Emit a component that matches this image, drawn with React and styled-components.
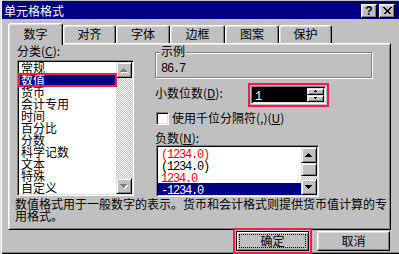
import React from "react";
import styled, { createGlobalStyle } from "styled-components";

const FACE = "#c0c0c0";
const LIGHT = "#dfdfdf";
const SHADOW = "#808080";
const NAVY = "#000080";
const MARK = "#e8204f";

const GlobalStyle = createGlobalStyle`
  * { box-sizing: border-box; }
  html, body { margin: 0; padding: 0; background: ${FACE}; }
  body {
    font-family: "Noto Sans CJK SC", "Noto Sans", sans-serif;
    font-size: 12px;
    line-height: 12px;
    color: #000;
  }
`;

const Window = styled.div`
  width: 399px;
  height: 254px;
  overflow: hidden;
  display: flex;
  flex-direction: column;
  padding: 1px 0 0 2px;
  background: ${FACE};
  box-shadow: inset 1px 0 0 ${LIGHT}, inset 2px 0 0 #fff, inset 0 -1px 0 #000,
    inset 0 -2px 0 ${SHADOW};
`;

const TitleBar = styled.div`
  height: 18px;
  flex-shrink: 0;
  display: flex;
  align-items: flex-start;
  padding: 3px 4px 0 2px;
  background: ${NAVY};
  color: #fff;
`;

const TitleText = styled.span`
  flex: 1;
  margin-top: 1px;
  line-height: 12px;
`;

const CaptionButtons = styled.div`
  display: flex;
  gap: 2px;
`;

const CaptionButton = styled.div`
  width: 16px;
  height: 14px;
  display: flex;
  align-items: center;
  justify-content: center;
  background: ${FACE};
  color: #000;
  border: 1px solid;
  border-color: #fff #000 #000 #fff;
  box-shadow: inset -1px -1px 0 ${SHADOW}, inset 1px 1px 0 ${LIGHT};
  font: bold 12px/12px "Liberation Sans", Arial, sans-serif;
`;

const TabStrip = styled.div`
  display: flex;
  align-items: flex-start;
  height: 20px;
  flex-shrink: 0;
  margin-top: 4px;
  padding-left: 6px;
  position: relative;
  z-index: 1;
`;

const Tab = styled.div`
  width: ${(p) => p.$w}px;
  height: ${(p) => (p.$active ? 22 : 18)}px;
  margin-top: ${(p) => (p.$active ? 0 : 2)}px;
  padding-top: ${(p) => (p.$active ? 4 : 2)}px;
  text-align: center;
  line-height: 12px;
  background: ${FACE};
  border: 1px solid;
  border-bottom: none;
  border-color: #fff #000 transparent #fff;
  border-radius: 3px 3px 0 0;
  box-shadow: inset -1px 0 0 ${SHADOW}, inset 1px 1px 0 ${LIGHT};
  position: relative;
  z-index: ${(p) => (p.$active ? 2 : 1)};
`;

const Panel = styled.div`
  height: 187px;
  flex-shrink: 0;
  margin: 0 8px 0 6px;
  padding: 1px 0 0 6px;
  border: 1px solid;
  border-color: #fff #000 #000 #fff;
  box-shadow: inset 1px 1px 0 ${LIGHT}, inset -1px -1px 0 ${SHADOW};
`;

const TopRow = styled.div`
  display: flex;
  height: 152px;
`;

const LeftColumn = styled.div`
  width: 117px;
  margin-left: 2px;
  display: flex;
  flex-direction: column;
`;

const RightColumn = styled.div`
  width: 217px;
  margin-left: 21px;
  display: flex;
  flex-direction: column;
`;

const FieldLabel = styled.div`
  height: ${(p) => p.$h || 12}px;
  line-height: 12px;
  margin-top: ${(p) => p.$mt || 0}px;
  white-space: nowrap;
`;

const Key = styled.u`
  text-decoration: underline;
  text-underline-offset: 1px;
`;

const Num = styled.span`
  font-family: "Liberation Mono", "DejaVu Sans Mono", monospace;
  font-size: 12px;
  letter-spacing: -1.2px;
`;

const ListBox = styled.div`
  width: ${(p) => p.$w}px;
  height: ${(p) => p.$h}px;
  margin-left: ${(p) => p.$ml || 0}px;
  display: flex;
  background: #fff;
  padding: 1px;
  border: 1px solid;
  border-color: ${SHADOW} #fff #fff ${SHADOW};
  box-shadow: inset 1px 1px 0 #000, inset -1px -1px 0 ${LIGHT};
`;

const Items = styled.div`
  flex: 1;
  display: flex;
  flex-direction: column;
  min-width: 0;
`;

const Item = styled.div`
  height: 12px;
  line-height: 12px;
  padding-left: ${(p) => p.$pl || 2}px;
  white-space: nowrap;
  color: ${(p) => (p.$selected ? "#fff" : p.$red ? "#ff0000" : "#000")};
  background: ${(p) => (p.$selected ? NAVY : "transparent")};
  outline: ${(p) => (p.$marked ? `2px solid ${MARK}` : "none")};
  outline-offset: -1px;
  position: relative;
`;

const ScrollBar = styled.div`
  width: 16px;
  display: flex;
  flex-direction: column;
`;

const ScrollButton = styled.div`
  height: ${(p) => p.$h || 16}px;
  flex-shrink: 0;
  display: flex;
  align-items: center;
  justify-content: center;
  background: ${FACE};
  border: 1px solid;
  border-color: ${LIGHT} #000 #000 ${LIGHT};
  box-shadow: inset 1px 1px 0 #fff, inset -1px -1px 0 ${SHADOW};
`;

const Track = styled.div`
  flex: 1;
  background-color: #fff;
  background-image: repeating-conic-gradient(${FACE} 0% 25%, #fff 0% 50%);
  background-size: 2px 2px;
`;

const GroupBox = styled.div`
  margin-top: 7px;
  height: 26px;
  display: flex;
  flex-direction: column;
  align-items: flex-start;
  border: 1px solid ${SHADOW};
  box-shadow: 1px 1px 0 #fff, inset 1px 1px 0 #fff;
`;

const GroupTitle = styled.span`
  margin: -8px 0 0 4px;
  padding: 0 1px;
  height: 12px;
  line-height: 12px;
  background: ${FACE};
`;

const GroupValue = styled.div`
  margin-top: 4px;
  padding-left: 5px;
  line-height: 12px;
`;

const DecimalRow = styled.div`
  display: flex;
  align-items: flex-start;
  height: 22px;
  margin-top: 6px;
`;

const DecimalLabel = styled.div`
  width: 96px;
  margin-top: 3px;
  white-space: nowrap;
`;

const Spinner = styled.div`
  width: 75px;
  height: 18px;
  margin-top: 2px;
  display: flex;
  padding: 1px;
  background: #fff;
  border: 1px solid;
  border-color: ${SHADOW} #fff #fff ${SHADOW};
  box-shadow: inset 1px 1px 0 #000, inset -1px -1px 0 ${LIGHT};
  outline: 2px solid ${MARK};
  outline-offset: 1px;
`;

const SpinField = styled.div`
  flex: 1;
  background: #000;
  color: #fff;
  padding-left: 2px;
  line-height: 14px;
`;

const SpinButtons = styled.div`
  width: 17px;
  display: flex;
  flex-direction: column;
`;

const SpinButton = styled(ScrollButton)`
  height: 7px;
  flex: 1;
`;

const CheckRow = styled.div`
  display: flex;
  align-items: flex-start;
  gap: 3px;
  margin: 6px 0 0 1px;
  height: 13px;
`;

const CheckBox = styled.div`
  width: 13px;
  height: 13px;
  background: #fff;
  border: 1px solid;
  border-color: ${SHADOW} #fff #fff ${SHADOW};
  box-shadow: inset 1px 1px 0 #000, inset -1px -1px 0 ${LIGHT};
`;

const CheckLabel = styled.span`
  line-height: 12px;
  white-space: nowrap;
`;

const Description = styled.div`
  width: 375px;
  margin-top: 1px;
  line-height: 12px;
`;

const ButtonRow = styled.div`
  display: flex;
  justify-content: flex-end;
  gap: 8px;
  margin-top: 1px;
  padding-right: 9px;
`;

const PushButton = styled.div`
  width: 73px;
  height: 20px;
  display: flex;
  padding: 2px;
  background: ${FACE};
  border: 1px solid;
  border-color: ${(p) => (p.$default ? "#000" : "#fff #000 #000 #fff")};
  box-shadow: ${(p) =>
    p.$default
      ? `inset 1px 1px 0 #fff, inset -1px -1px 0 ${SHADOW}`
      : `inset -1px -1px 0 ${SHADOW}, inset 1px 1px 0 ${LIGHT}`};
  outline: ${(p) => (p.$marked ? `2px solid ${MARK}` : "none")};
  outline-offset: 1px;
`;

const ButtonFace = styled.span`
  flex: 1;
  display: flex;
  align-items: center;
  justify-content: center;
  line-height: 12px;
  border: 1px dotted ${(p) => (p.$focus ? "#000" : "transparent")};
`;

const Arrow = ({ dir, disabled, w = 7, h = 4 }) => {
  const pts =
    dir === "up" ? `0,${h} ${w},${h} ${w / 2},0` : `0,0 ${w},0 ${w / 2},${h}`;
  return (
    <svg width={w + 1} height={h + 1} viewBox={`0 0 ${w + 1} ${h + 1}`} shapeRendering="crispEdges">
      {disabled && <polygon points={pts} fill="#fff" transform="translate(1,1)" />}
      <polygon points={pts} fill={disabled ? SHADOW : "#000"} />
    </svg>
  );
};

const CloseGlyph = () => (
  <svg width="9" height="8" viewBox="0 0 9 8" shapeRendering="crispEdges">
    <path d="M0.5 0.5 L7.5 7.5 M1.5 0.5 L8.5 7.5 M7.5 0.5 L0.5 7.5 M8.5 0.5 L1.5 7.5" stroke="#000" strokeWidth="1" />
  </svg>
);

const tabs = [
  { label: "数字", w: 55, active: true },
  { label: "对齐", w: 53 },
  { label: "字体", w: 54 },
  { label: "边框", w: 55 },
  { label: "图案", w: 54 },
  { label: "保护", w: 53 },
];

const categories = ["常规", "数值", "货币", "会计专用", "时间", "百分比", "分数", "科学记数", "文本", "特殊", "自定义"];

const negatives = [
  { text: "(1234.0)", red: true },
  { text: "(1234.0)" },
  { text: "1234.0", red: true },
  { text: "-1234.0", selected: true },
];

export default function App() {
  return (
    <>
      <GlobalStyle />
      <Window>
        <TitleBar>
          <TitleText>单元格格式</TitleText>
          <CaptionButtons>
            <CaptionButton>?</CaptionButton>
            <CaptionButton>
              <CloseGlyph />
            </CaptionButton>
          </CaptionButtons>
        </TitleBar>

        <TabStrip>
          {tabs.map((t) => (
            <Tab key={t.label} $w={t.w} $active={t.active}>
              {t.label}
            </Tab>
          ))}
        </TabStrip>

        <Panel>
          <TopRow>
            <LeftColumn>
              <FieldLabel $h={15}>
                分类(<Key>C</Key>):
              </FieldLabel>
              <ListBox $w={117} $h={136}>
                <Items>
                  {categories.map((c, i) => (
                    <Item key={c} $selected={i === 1} $marked={i === 1}>
                      {c}
                    </Item>
                  ))}
                </Items>
                <ScrollBar>
                  <ScrollButton>
                    <Arrow dir="up" disabled />
                  </ScrollButton>
                  <Track />
                  <ScrollButton>
                    <Arrow dir="down" disabled />
                  </ScrollButton>
                </ScrollBar>
              </ListBox>
            </LeftColumn>

            <RightColumn>
              <GroupBox>
                <GroupTitle>示例</GroupTitle>
                <GroupValue>
                  <Num>86.7</Num>
                </GroupValue>
              </GroupBox>

              <DecimalRow>
                <DecimalLabel>
                  小数位数(<Key>D</Key>):
                </DecimalLabel>
                <Spinner>
                  <SpinField>
                    <Num>1</Num>
                  </SpinField>
                  <SpinButtons>
                    <SpinButton>
                      <Arrow dir="up" w={4} h={2} />
                    </SpinButton>
                    <SpinButton>
                      <Arrow dir="down" w={4} h={2} />
                    </SpinButton>
                  </SpinButtons>
                </Spinner>
              </DecimalRow>

              <CheckRow>
                <CheckBox />
                <CheckLabel>
                  使用千位分隔符(,)(<Key>U</Key>)
                </CheckLabel>
              </CheckRow>

              <FieldLabel $h={13} $mt={7}>
                负数(<Key>N</Key>):
              </FieldLabel>
              <ListBox $w={163} $h={52} $ml={1}>
                <Items>
                  {negatives.map((n, i) => (
                    <Item key={i} $pl={3} $red={n.red} $selected={n.selected}>
                      <Num>{n.text}</Num>
                    </Item>
                  ))}
                </Items>
                <ScrollBar>
                  <ScrollButton>
                    <Arrow dir="up" />
                  </ScrollButton>
                  <ScrollButton $h={13} />
                  <Track />
                  <ScrollButton>
                    <Arrow dir="down" />
                  </ScrollButton>
                </ScrollBar>
              </ListBox>
            </RightColumn>
          </TopRow>

          <Description>
            数值格式用于一般数字的表示。货币和会计格式则提供货币值计算的专用格式。
          </Description>
        </Panel>

        <ButtonRow>
          <PushButton $default $marked>
            <ButtonFace $focus>确定</ButtonFace>
          </PushButton>
          <PushButton>
            <ButtonFace>取消</ButtonFace>
          </PushButton>
        </ButtonRow>
      </Window>
    </>
  );
}
